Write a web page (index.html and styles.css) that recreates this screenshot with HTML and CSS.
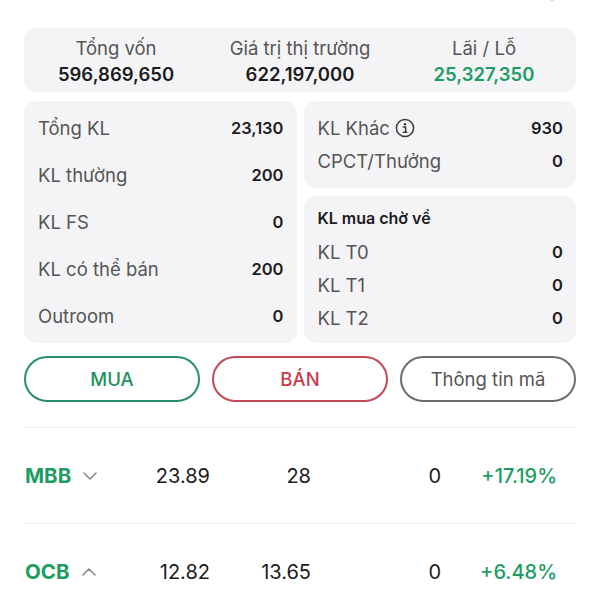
FILE: index.html
```html
<!DOCTYPE html>
<html lang="vi">
<head>
<meta charset="utf-8">
<link rel="stylesheet" href="styles.css">
</head>
<body>
<div class="page">
  <div class="peek">
    <div class="row peek-row">
      <div class="sym">VIB</div>
      <div class="num">20.57</div>
      <div class="num">25.5</div>
      <div class="num">200</div>
      <div class="pct">+4.24%</div>
    </div>
  </div>

  <div class="summary">
    <div class="sum-col">
      <div class="sum-label">Tổng vốn</div>
      <div class="sum-value">596,869,650</div>
    </div>
    <div class="sum-col">
      <div class="sum-label">Giá trị thị trường</div>
      <div class="sum-value">622,197,000</div>
    </div>
    <div class="sum-col">
      <div class="sum-label">Lãi / Lỗ</div>
      <div class="sum-value green">25,327,350</div>
    </div>
  </div>

  <div class="grid">
    <div class="box box-left">
      <div class="kv"><span class="k">Tổng KL</span><span class="v">23,130</span></div>
      <div class="kv"><span class="k">KL thường</span><span class="v">200</span></div>
      <div class="kv"><span class="k">KL FS</span><span class="v">0</span></div>
      <div class="kv"><span class="k">KL có thể bán</span><span class="v">200</span></div>
      <div class="kv"><span class="k">Outroom</span><span class="v">0</span></div>
    </div>
    <div class="right-col">
      <div class="box box-rt">
        <div class="kv"><span class="k k-icon">KL Khác
          <svg class="info" viewBox="0 0 20 20" width="20" height="20"><circle cx="10" cy="10" r="8.6" fill="none" stroke="#3a3a3a" stroke-width="1.5"/><circle cx="10" cy="6.2" r="1.2" fill="#3a3a3a"/><path d="M8.4 9h2.2v5.2M8.4 14.2h3.4" fill="none" stroke="#3a3a3a" stroke-width="1.6" stroke-linecap="round" stroke-linejoin="round"/></svg>
        </span><span class="v">930</span></div>
        <div class="kv"><span class="k">CPCT/Thưởng</span><span class="v">0</span></div>
      </div>
      <div class="box box-rb">
        <div class="box-title">KL mua chờ về</div>
        <div class="kv"><span class="k">KL T0</span><span class="v">0</span></div>
        <div class="kv"><span class="k">KL T1</span><span class="v">0</span></div>
        <div class="kv"><span class="k">KL T2</span><span class="v">0</span></div>
      </div>
    </div>
  </div>

  <div class="actions">
    <button class="btn btn-buy">MUA</button>
    <button class="btn btn-sell">BÁN</button>
    <button class="btn btn-info">Thông tin mã</button>
  </div>

  <div class="divider"></div>
  <div class="row stock-row">
    <div class="sym">MBB
      <svg class="chev" viewBox="0 0 14 8" width="14" height="8"><path d="M1 1l6 6 6-6" fill="none" stroke="#8a8a8a" stroke-width="1.6" stroke-linecap="round" stroke-linejoin="round"/></svg>
    </div>
    <div class="num">23.89</div>
    <div class="num">28</div>
    <div class="num">0</div>
    <div class="pct">+17.19%</div>
  </div>
  <div class="divider"></div>
  <div class="row stock-row">
    <div class="sym">OCB
      <svg class="chev" viewBox="0 0 14 8" width="14" height="8"><path d="M1 7l6-6 6 6" fill="none" stroke="#8a8a8a" stroke-width="1.6" stroke-linecap="round" stroke-linejoin="round"/></svg>
    </div>
    <div class="num">12.82</div>
    <div class="num">13.65</div>
    <div class="num">0</div>
    <div class="pct">+6.48%</div>
  </div>
</div>
</body>
</html>
```

FILE: styles.css
```css
* { box-sizing: border-box; }
html, body { margin: 0; padding: 0; background: #fff; }
body {
  font-family: Inter, "Noto Sans", "DejaVu Sans", sans-serif;
  color: #1c1c1e;
  width: 600px;
  overflow: hidden;
}
.page { padding: 0 24px; }

.peek { height: 3px; overflow: hidden; }
.peek-row { margin-top: -19px; height: 24px; line-height: 24px; opacity: 0.6; }

.row {
  display: grid;
  grid-template-columns: 110px 76px 101px 130px 116px;
  align-items: center;
  font-size: 20px;
}
.sym {
  display: flex;
  align-items: center;
  color: #1e9d63;
  font-weight: 700;
  padding-left: 1px;
  font-size: 20.5px;
}
.chev { margin-left: 12px; }
.num { text-align: right; color: #1c1c1e; }
.pct { text-align: right; color: #1e9d63; font-weight: 500; }

.summary {
  margin-top: 25px;
  background: #f4f4f6;
  border-radius: 12px;
  display: grid;
  grid-template-columns: 1fr 1fr 1fr;
  padding: 8px 0 6px;
}
.sum-col { text-align: center; display: flex; flex-direction: column; gap: 2px; }
.sum-label { font-size: 18.5px; line-height: 24px; color: #555; }
.sum-value { font-size: 18.5px; line-height: 24px; font-weight: 600; color: #1c1c1e; }
.green { color: #1e9d63; }

.grid {
  margin-top: 9px;
  display: grid;
  grid-template-columns: 1fr 1fr;
  column-gap: 7px;
  height: 242px;
}
.box {
  background: #f4f4f6;
  border-radius: 12px;
  padding: 16px 13px 16px 14px;
}
.box-left {
  display: flex;
  flex-direction: column;
  justify-content: space-between;
}
.right-col { display: flex; flex-direction: column; gap: 8px; }
.box-rt { display: flex; flex-direction: column; gap: 11px; }
.box-rb { flex: 1; padding-top: 12px; padding-bottom: 14px; display: flex; flex-direction: column; gap: 11px; }
.box-title { font-size: 16px; font-weight: 600; line-height: 20px; color: #1c1c1e; margin-bottom: 2px; }
.kv {
  display: flex;
  justify-content: space-between;
  align-items: center;
  line-height: 22px;
}
.k { font-size: 18.5px; color: #555; }
.k-icon { display: flex; align-items: center; gap: 5px; }
.info { display: block; }
.v { font-size: 16.5px; font-weight: 600; color: #1c1c1e; }

.actions {
  margin-top: 13px;
  display: grid;
  grid-template-columns: 1fr 1fr 1fr;
  gap: 12px;
}
.btn {
  height: 46px;
  border-radius: 23px;
  background: #fff;
  font-family: inherit;
  font-size: 18.5px;
  border: 2px solid;
  padding: 0;
}
.btn-buy { border-color: #2a8f66; color: #1e9060; font-weight: 500; }
.btn-sell { border-color: #c24a58; color: #c83a4c; font-weight: 500; }
.btn-info { border-color: #6d6d6d; color: #555; }

.divider { margin-top: 25px; height: 1px; background: #f0f0f2; }
.stock-row { height: 95px; }
.stock-row + .divider { margin-top: 0; }
```
